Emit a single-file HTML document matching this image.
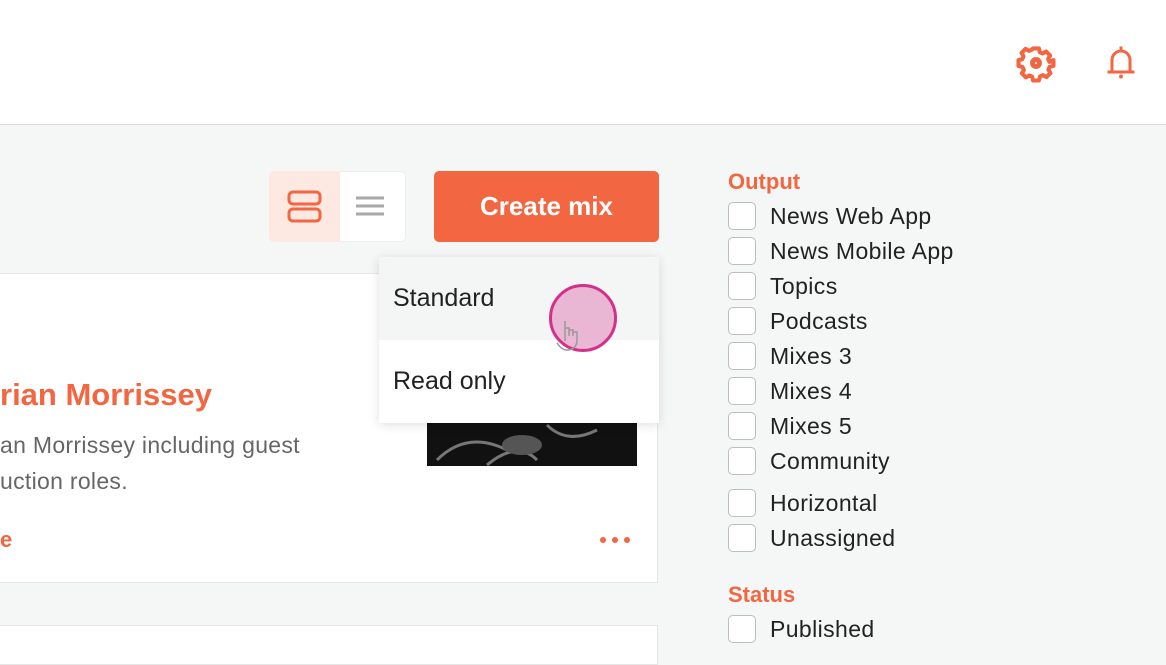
<!DOCTYPE html>
<html><head><style>
*{margin:0;padding:0;box-sizing:border-box}
body{width:1166px;height:643px;overflow:hidden;background:#f5f6f6;font-family:"Liberation Sans",sans-serif;position:relative}
.abs{position:absolute}
.hdr{left:0;top:0;width:1166px;height:125px;background:#fff;border-bottom:1px solid #dcdcdc}
.card{background:#fff;border:1px solid #e6e6e6}
.cb{position:absolute;left:728px;width:28px;height:28px;border:1.5px solid #bdbdbd;border-radius:5px;background:#fff}
.lb{position:absolute;left:770px;font-size:23px;color:#222;line-height:28px;letter-spacing:.4px}
.or{color:#f26641}
</style></head><body>
<div class="abs hdr"></div>
<svg class="abs" style="left:1015px;top:42px" width="42" height="42" viewBox="0 0 24 24" fill="none" stroke="#f26641" stroke-width="2.8" stroke-linejoin="round"><path d="M10 2h4l.6 2.6 2 .9 2.3-1.4 2.8 2.8-1.4 2.3.9 2L24 10v4l-2.6.6-.9 2 1.4 2.3-2.8 2.8-2.3-1.4-2 .9L14 24h-4l-.6-2.6-2-.9-2.3 1.4-2.8-2.8 1.4-2.3-.9-2L0 14v-4l2.6-.6.9-2-1.4-2.3 2.8-2.8 2.3 1.4 2-.9z" transform="translate(2 2) scale(.833)"/><circle cx="12" cy="12" r="2" fill="none"/></svg>
<svg class="abs" style="left:1103px;top:43px" width="36" height="40" viewBox="0 0 24 26" fill="none" stroke="#f26641" stroke-width="2"><path d="M12 2v2M6 18V11a6 6 0 0 1 12 0v7M3 19h18"/><circle cx="12" cy="22" r="1.3" fill="#f26641" stroke="none"/></svg>

<div class="abs" style="left:269px;top:171px;width:137px;height:71px;background:#fff;border:1px solid #eee;border-radius:5px"></div>
<div class="abs" style="left:269px;top:171px;width:71px;height:71px;background:#fde9e2;border-radius:5px 0 0 5px"></div>
<svg class="abs" style="left:287px;top:190px" width="36" height="34" viewBox="0 0 36 34" fill="none" stroke="#f26641" stroke-width="3"><rect x="2" y="2" width="31" height="12" rx="4"/><rect x="2" y="19" width="31" height="12" rx="4"/></svg>
<svg class="abs" style="left:355px;top:195px" width="30" height="24" viewBox="0 0 30 24" stroke="#a8a8a8" stroke-width="3"><path d="M1 3h28M1 11h28M1 19h28"/></svg>
<div class="abs" style="left:434px;top:171px;width:225px;height:71px;background:#f26641;border-radius:5px;color:#fff;font-size:26px;font-weight:bold;text-align:center;line-height:71px">Create mix</div>

<div class="abs card" style="left:-2px;top:273px;width:660px;height:310px"></div>
<div class="abs or" style="left:0;top:377px;font-size:31px;font-weight:bold">rian Morrissey</div>
<div class="abs" style="left:0;top:427px;font-size:23px;color:#666;line-height:36px;letter-spacing:.3px">an Morrissey including guest<br>uction roles.</div>
<div class="abs or" style="left:0;top:527px;font-size:22px;font-weight:bold">e</div>
<svg class="abs" style="left:598px;top:534px" width="36" height="12"><circle cx="5" cy="6" r="3" fill="#f26641"/><circle cx="17" cy="6" r="3" fill="#f26641"/><circle cx="29" cy="6" r="3" fill="#f26641"/></svg>
<div class="abs" style="left:427px;top:420px;width:210px;height:46px;background:#111"></div>
<svg class="abs" style="left:427px;top:420px" width="210" height="46"><path d="M10 40 Q40 10 80 30 M60 45 Q90 20 110 40 M120 5 Q140 25 170 10" stroke="#777" stroke-width="3" fill="none"/><ellipse cx="95" cy="25" rx="20" ry="10" fill="#555"/></svg>
<div class="abs card" style="left:-2px;top:625px;width:660px;height:40px"></div>

<div class="abs" style="left:379px;top:257px;width:280px;height:166px;background:#fff;box-shadow:0 2px 10px rgba(0,0,0,.12)">
<div style="height:83px;background:#f4f5f5;font-size:25px;color:#222;padding:27px 0 0 14px">Standard</div>
<div style="height:83px;font-size:25px;color:#222;padding:27px 0 0 14px">Read only</div>
</div>
<div class="abs" style="left:549px;top:284px;width:68px;height:68px;border-radius:50%;background:rgba(230,170,205,.85);border:3px solid #d4308a"></div>
<svg class="abs" style="left:555px;top:318px" width="32" height="42" fill="none" stroke="#999" stroke-width="1.5"><path d="M10 3v20M10 10h4v8M14 12h4v6M18 14h4v8c0 8-6 10-10 10-5 0-8-4-10-7"/></svg>

<div class="abs or" style="left:728px;top:169px;font-size:22px;font-weight:bold">Output</div>
<div class="cb" style="top:202px"></div><div class="lb" style="top:202px">News Web App</div>
<div class="cb" style="top:237px"></div><div class="lb" style="top:237px">News Mobile App</div>
<div class="cb" style="top:272px"></div><div class="lb" style="top:272px">Topics</div>
<div class="cb" style="top:307px"></div><div class="lb" style="top:307px">Podcasts</div>
<div class="cb" style="top:342px"></div><div class="lb" style="top:342px">Mixes 3</div>
<div class="cb" style="top:377px"></div><div class="lb" style="top:377px">Mixes 4</div>
<div class="cb" style="top:412px"></div><div class="lb" style="top:412px">Mixes 5</div>
<div class="cb" style="top:447px"></div><div class="lb" style="top:447px">Community</div>
<div class="cb" style="top:489px"></div><div class="lb" style="top:489px">Horizontal</div>
<div class="cb" style="top:524px"></div><div class="lb" style="top:524px">Unassigned</div>
<div class="abs or" style="left:728px;top:582px;font-size:22px;font-weight:bold">Status</div>
<div class="cb" style="top:615px"></div><div class="lb" style="top:615px">Published</div>
</body></html>
